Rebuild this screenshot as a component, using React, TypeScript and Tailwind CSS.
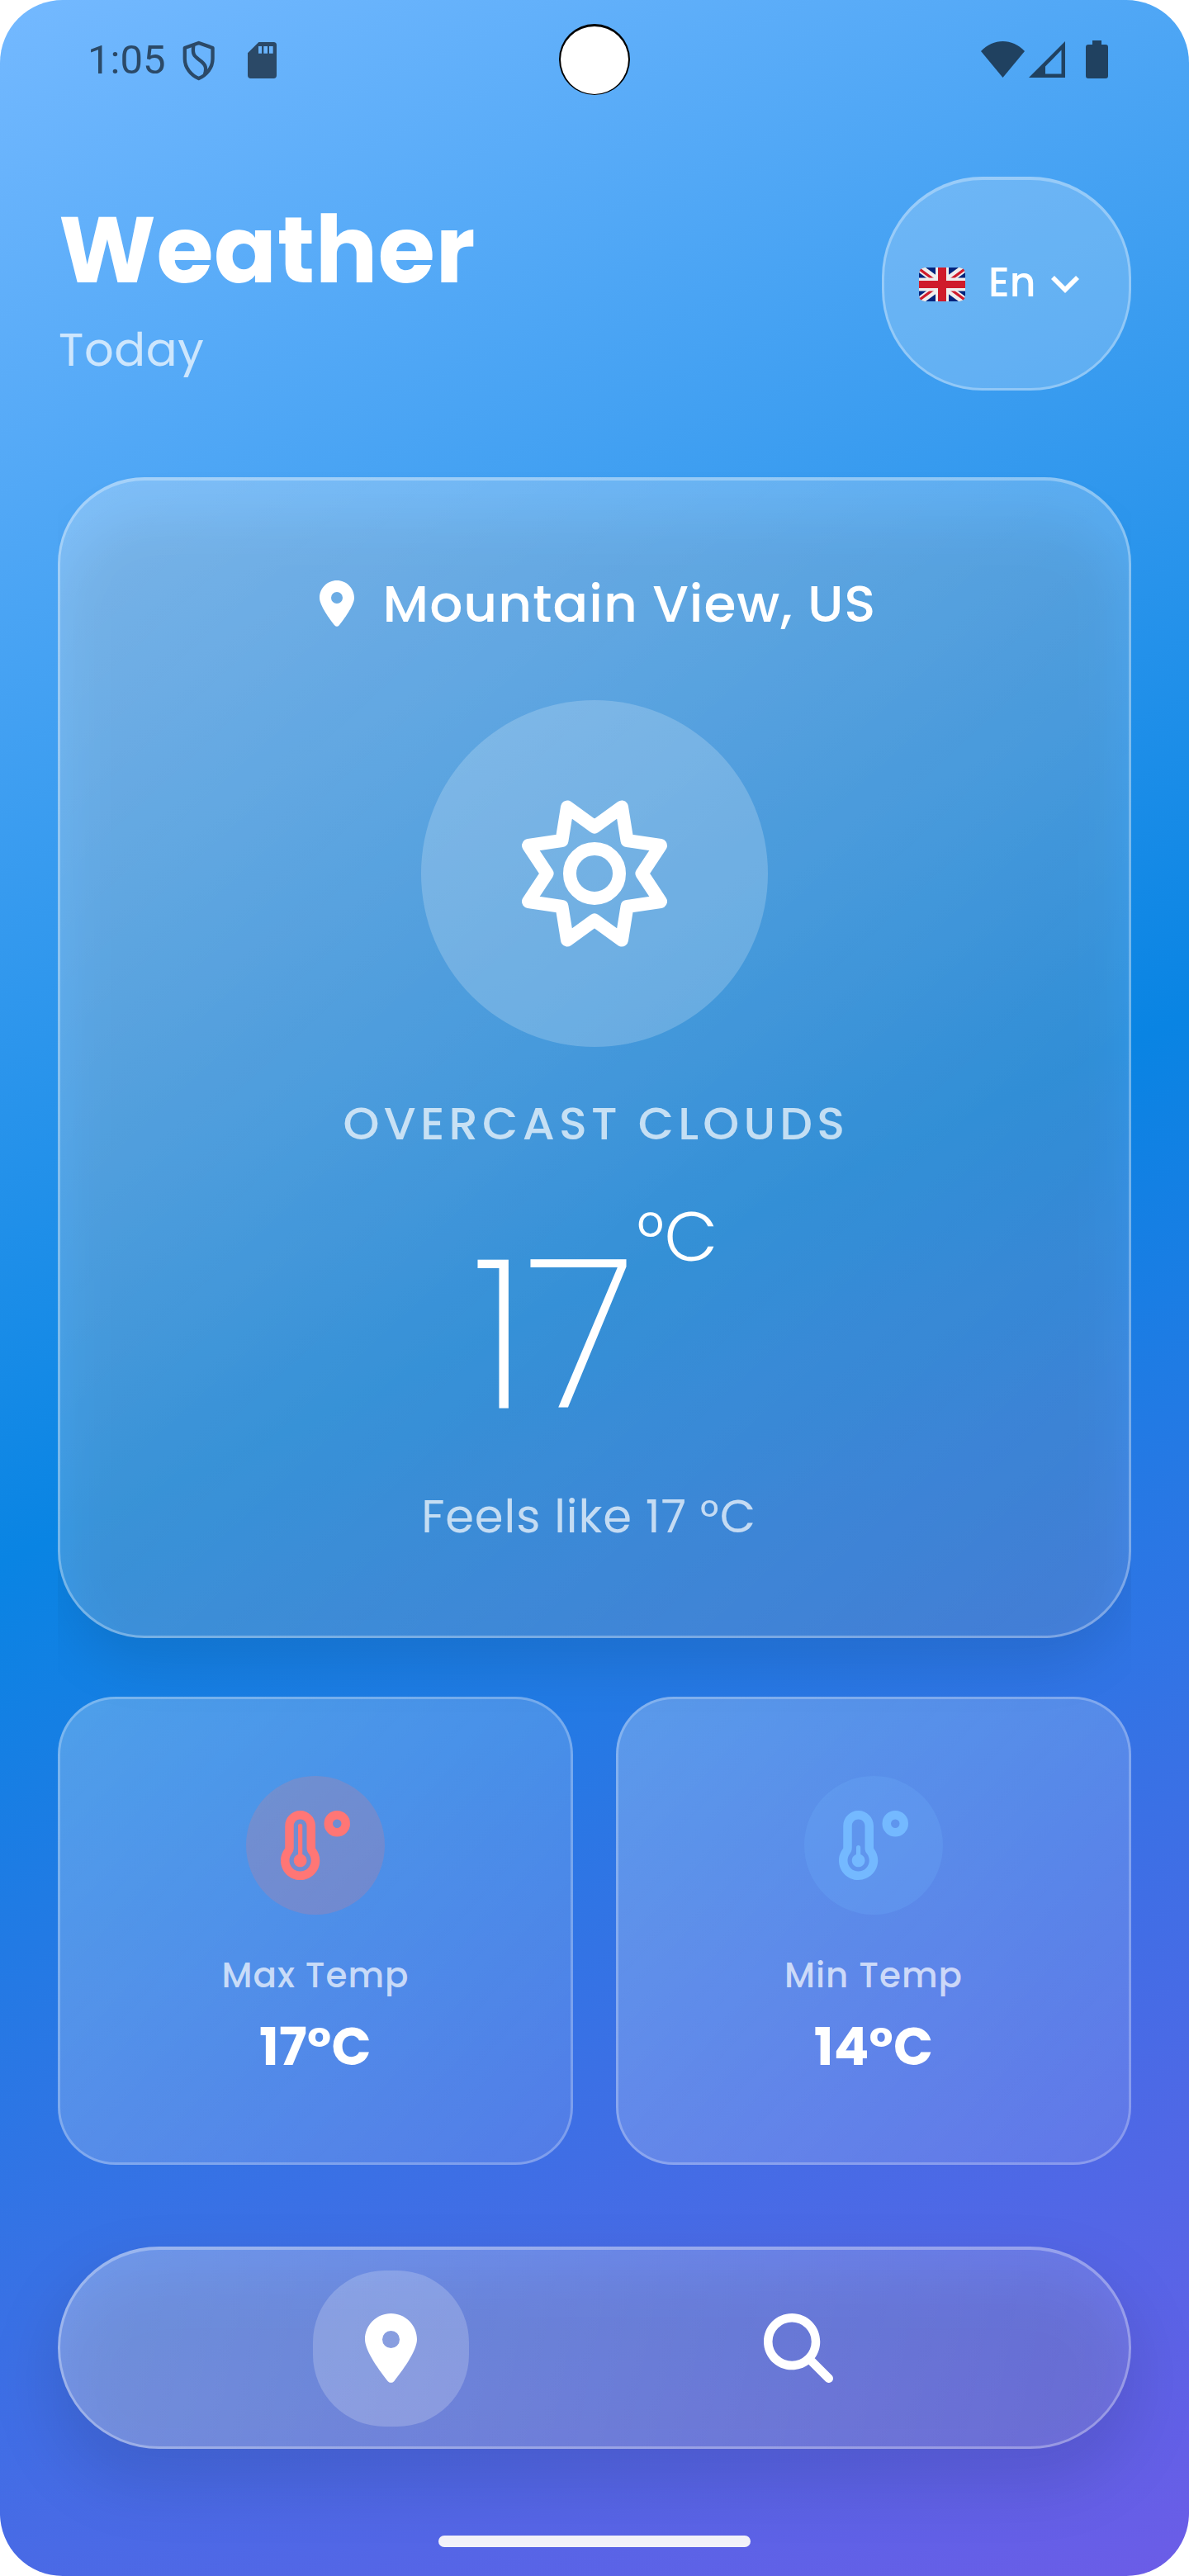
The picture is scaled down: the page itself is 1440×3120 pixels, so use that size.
import React from "react";
import {
  FaLocationDot,
  FaMagnifyingGlass,
  FaTemperatureHigh,
  FaTemperatureLow,
} from "react-icons/fa6";

function ShieldIcon() {
  return (
    <svg className="h-[49px] w-10" viewBox="33 55 120 148" fill="none" stroke="currentColor" strokeWidth="13">
      <path d="M92 64 L143 82 V122 C143 155 120 182 92 194 C64 182 41 155 41 122 V82 Z" strokeLinejoin="round" />
      <path d="M73 73 C68 105 75 112 93 125 C113 139 124 152 114 178" />
    </svg>
  );
}

function SdCardIcon() {
  return (
    <svg className="h-11 w-[35px]" viewBox="0 0 105 132" fill="currentColor">
      <path
        fillRule="evenodd"
        d="M40 0H94Q105 0 105 11V121Q105 132 94 132H11Q0 132 0 121V40ZM39 15V41H51V15ZM58 15V41H72V15ZM78 15V41H92V15Z"
      />
    </svg>
  );
}

function WifiIcon() {
  return (
    <svg className="h-11 w-[53px]" viewBox="0 0 53 44" fill="currentColor">
      <path d="M26.5 44 L0 12 C15 -4 38 -4 53 12 Z" />
    </svg>
  );
}

function SignalIcon() {
  return (
    <svg className="size-11" viewBox="0 0 44 44" fill="currentColor">
      <path fillRule="evenodd" d="M44 0V44H0ZM39.5 10.5 20 30.5V39.5H39.5Z" />
    </svg>
  );
}

function BatteryIcon() {
  return (
    <svg className="h-[46px] w-[27px]" viewBox="0 0 27 46" fill="currentColor">
      <path d="M8 0H19V5H24Q27 5 27 8V43Q27 46 24 46H3Q0 46 0 43V8Q0 5 3 5H8Z" />
    </svg>
  );
}

function FlagIcon() {
  return (
    <svg className="h-[41px] w-14 rounded-[7px]" viewBox="0 0 56 41" preserveAspectRatio="none">
      <rect width="56" height="41" fill="#00247d" />
      <path d="M0 0 56 41M56 0 0 41" stroke="#eeeeee" strokeWidth="9.5" />
      <path d="M0 1.500 21 17M35 24 56 39.500M56 1.500 35 17M21 24 0 39.500" stroke="#cf1b2b" strokeWidth="3.2" />
      <path d="M28 0V41M0 20.500H56" stroke="#eeeeee" strokeWidth="16" />
      <path d="M28 0V41" stroke="#cf1b2b" strokeWidth="10" />
      <path d="M0 20.500H56" stroke="#cf1b2b" strokeWidth="9" />
    </svg>
  );
}

function ChevronIcon() {
  return (
    <svg className="h-[21px] w-[34px]" viewBox="6 8.59 12 7.41" fill="currentColor">
      <path d="M7.41 8.59 12 13.17l4.59-4.58L18 10l-6 6-6-6z" />
    </svg>
  );
}

function SunIcon() {
  return (
    <svg
      className="size-[180px]"
      viewBox="-90 -90 180 180"
      fill="none"
      stroke="currentColor"
      strokeWidth="16"
      strokeLinejoin="round"
    >
      <path d="M0 -56.500 33 -80.500 39.500 -40 80 -34 57.500 0 80 34 39.500 40 33 80.500 0 56.500 -33 80.500 -39.500 40 -80 34 -57.500 0 -80 -34 -39.500 -40 -33 -80.500Z" />
      <circle r="30" />
    </svg>
  );
}

function StatusBar() {
  return (
    <div className="flex h-36 items-center justify-between pr-[98px] pl-[106px] text-[#2b4967]">
      <div className="flex items-center">
        <span className="w-[95px] font-[Roboto,sans-serif] text-[49px] leading-none">1:05</span>
        <div className="flex items-center gap-[39px] pt-0.5 pl-5">
          <ShieldIcon />
          <SdCardIcon />
        </div>
      </div>
      <div className="flex items-center text-[#204160]">
        <WifiIcon />
        <div className="flex items-center gap-[25px] pl-[5px]">
          <SignalIcon />
          <BatteryIcon />
        </div>
      </div>
    </div>
  );
}

function Header() {
  return (
    <header className="mt-[70px] flex h-[259px] items-center justify-between px-[70px]">
      <div>
        <h1 className="pl-px text-[112px] leading-[160px] font-bold tracking-[0.6px]">Weather</h1>
        <p className="pl-px text-[56px] leading-[82px] tracking-[0.6px] text-white/70">Today</p>
      </div>
      <button className="flex h-[259px] w-[302px] items-center rounded-[122px] border-[3px] border-t-4 border-white/30 bg-white/20 pl-[42px]">
        <FlagIcon />
        <span className="w-[76px] pb-1 pl-7 text-[49px] leading-none font-medium">En</span>
        <span className="pt-px pl-7">
          <ChevronIcon />
        </span>
      </button>
    </header>
  );
}

function CurrentWeather() {
  return (
    <section className="relative mx-[70px] mt-[105px] h-[1406px]">
      <div className="absolute inset-x-0 -top-20 -bottom-36 overflow-hidden">
        <div className="absolute inset-x-2 top-[130px] bottom-[110px] rounded-[105px] bg-black/9 blur-[30px]" />
      </div>
      <div className="relative flex h-full flex-col items-center rounded-[105px] border-[3px] border-t-4 border-white/30 bg-[linear-gradient(137.2deg,rgba(255,255,255,0.28),rgba(255,255,255,0.12))] bg-origin-border pt-[102px]">
        <div className="flex h-[94px] items-center gap-[35px] pl-2">
          <FaLocationDot className="h-14 w-[42px]" />
          <span className="text-[63px] leading-[94px] font-medium tracking-[1px]">Mountain View, US</span>
        </div>
        <div className="mt-[70px] flex size-[420px] items-center justify-center rounded-full bg-white/20">
          <SunIcon />
        </div>
        <p className="mt-[51px] pl-1 text-[56px] leading-[84px] font-medium tracking-[5.25px] text-white/70">
          OVERCAST CLOUDS
        </p>
        <div className="mt-[65px] flex h-[248px] items-start pl-0.5">
          <span className="mr-[3px] pt-[49px] font-['Poppins_ExtraLight',Poppins,Inter,sans-serif] text-[252px] leading-[200px]">
            17
          </span>
          <span className="text-[84px] leading-[60px] font-light">°C</span>
        </div>
        <p className="mt-[79px] pr-3.5 text-[56px] leading-[84px] tracking-[0.9px] text-white/70">Feels like 17 °C</p>
      </div>
    </section>
  );
}

interface TempCardProps {
  label: string;
  value: string;
  circle: string;
  children: React.ReactNode;
}

function TempCard({ label, value, circle, children }: TempCardProps) {
  return (
    <div className="flex h-[567px] flex-col items-center rounded-[70px] border-[3px] border-white/25 bg-[linear-gradient(132.3deg,rgba(255,255,255,0.25),rgba(255,255,255,0.1))] bg-origin-border pt-[93px]">
      <div className={`flex size-[168px] items-center justify-center rounded-full ${circle}`}>{children}</div>
      <p className="mt-[42px] text-[42px] leading-[64px] font-medium tracking-[1px] text-white/70">{label}</p>
      <p className="mt-[7px] text-[63px] leading-[94px] font-bold tracking-[0.3px]">{value}</p>
    </div>
  );
}

function BottomNav() {
  return (
    <nav className="relative mx-[70px] mt-[99px] h-[245px]">
      <div className="absolute -inset-x-2 top-[30px] -bottom-[45px] rounded-[122px] bg-black/10 blur-[36px]" />
      <div className="relative flex h-full items-center justify-around rounded-full border-[3px] border-t-4 border-white/30 bg-[linear-gradient(100.7deg,rgba(255,255,255,0.29),rgba(255,255,255,0.12))] bg-origin-border px-[153px]">
        <button className="flex size-[189px] items-center justify-center rounded-[87px] bg-white/20">
          <FaLocationDot className="h-[84px] w-[63px]" />
        </button>
        <button className="flex size-[189px] items-center justify-center">
          <FaMagnifyingGlass className="size-[84px]" />
        </button>
      </div>
    </nav>
  );
}

export default function App() {
  return (
    <div className="h-[3120px] w-[1440px] bg-white">
      <main className="relative flex h-full w-full flex-col overflow-hidden rounded-[76px] bg-[linear-gradient(155.22deg,#74b9ff_0%,#0984e3_50%,#6c5ce7_100%)] font-[Poppins,Inter,sans-serif] text-white">
        <StatusBar />
        <div className="absolute top-[29px] left-[677px] h-[86px] w-[86px] rounded-full border-2 border-t-[3px] border-b border-black bg-white" />
        <Header />
        <CurrentWeather />
        <div className="mx-[70px] mt-[71px] grid grid-cols-2 gap-[52px]">
          <TempCard label="Max Temp" value="17°C" circle="bg-[#ff7675]/20 text-[#ff7675]">
            <FaTemperatureHigh className="size-[84px]" />
          </TempCard>
          <TempCard label="Min Temp" value="14°C" circle="bg-[#74b9ff]/20 text-[#74b9ff]">
            <FaTemperatureLow className="size-[84px]" />
          </TempCard>
        </div>
        <BottomNav />
        <div className="mx-auto mt-[105px] h-3.5 w-[378px] rounded-full bg-[#f2f2fa]" />
      </main>
    </div>
  );
}
